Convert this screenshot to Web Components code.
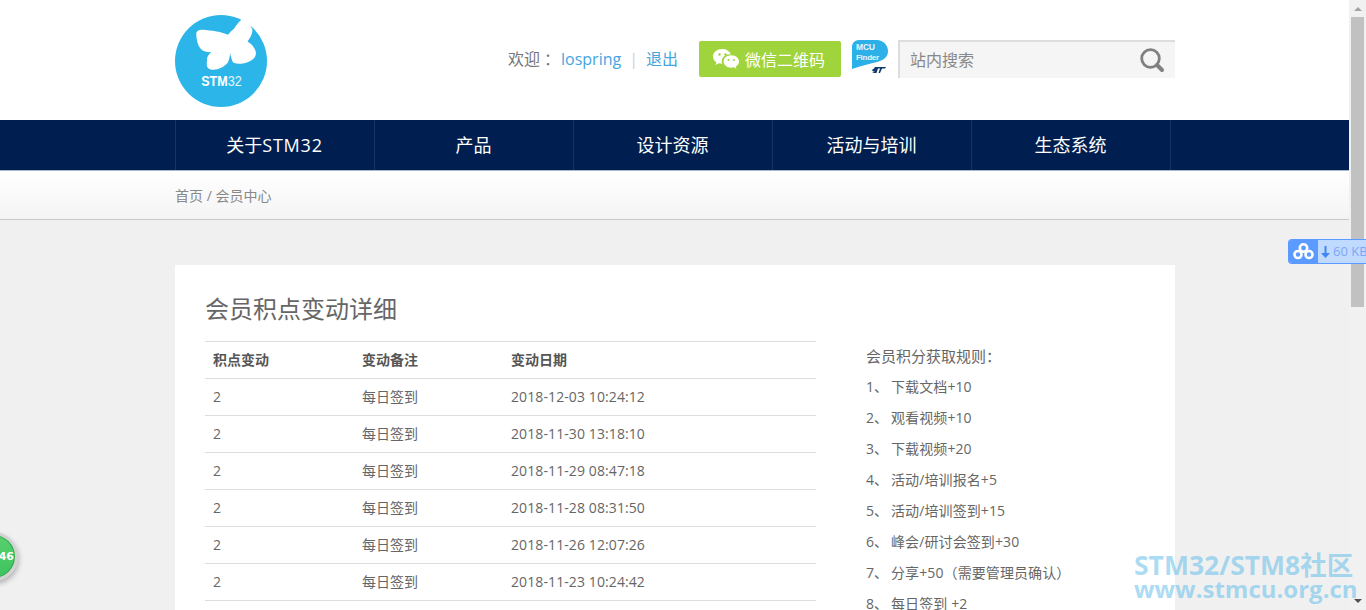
<!DOCTYPE html>
<html lang="zh">
<head>
<meta charset="utf-8">
<title>会员积点变动详细</title>
<style>
  html, body { margin: 0; height: 610px; overflow: hidden; background: #f0f0f0; }
  body { font-family: "Open Sans", "Noto Sans CJK SC", sans-serif; color: #666; }
</style>
</head>
<body>
<st-page>
  <st-header></st-header>
  <st-nav></st-nav>
  <st-crumb></st-crumb>
  <st-card>
    <st-points slot="main"></st-points>
    <st-rules slot="side"></st-rules>
  </st-card>
</st-page>
<st-float></st-float>
<script>
(function () {
  'use strict';

  function define(name, css, html, render) {
    customElements.define(name, class extends HTMLElement {
      constructor() {
        super();
        this.attachShadow({ mode: 'open' });
      }
      connectedCallback() {
        this.shadowRoot.innerHTML = `<style>${css}</style>${render ? render() : html}`;
      }
    });
  }

  // page + fake browser scrollbar
  define('st-page', `
    :host { display: flex; height: 610px; overflow: hidden; }
    .main { width: 1349px; flex: none; overflow: hidden; }
    .bar { width: 17px; flex: none; background: #f1f1f1; display: flex; flex-direction: column; align-items: center; }
    .up { width: 0; height: 0; margin-top: 7px; border: 4px solid transparent; border-top: 0; border-bottom: 4px solid #a3a3a3; }
    .thumb { width: 13px; height: 290px; margin-top: 6px; background: #c1c1c1; }
    .down { width: 0; height: 0; margin-top: auto; margin-bottom: 7px; border: 4px solid transparent; border-bottom: 0; border-top: 4px solid #505050; }
  `, `
    <div class="main"><slot></slot></div>
    <div class="bar"><div class="up"></div><div class="thumb"></div><div class="down"></div></div>
  `);

  define('st-header', `
    :host { display: block; background: #fff; height: 120px; }
    .wrap { width: 1000px; margin: 0 auto; height: 120px; display: flex; align-items: flex-start; position: relative; left: .5px; }
    .logo { width: 92px; height: 92px; margin-top: 15px; flex: none; display: block; }
    .who { margin-left: 241px; width: 166px; flex: none; margin-top: 47px; font-size: 16px; line-height: 24px; white-space: nowrap; color: #777; display: flex; }
    .who a { color: #45a5df; text-decoration: none; }
    .who .colon { font-family: "Noto Sans CJK TC", sans-serif; width: 16px; }
    .who .sep { color: #cfcfdc; margin: 0 8px 0 8px; }
    .who .name { margin-left: 5px; }
    .wx { margin-left: 25px; margin-top: 41px; width: 142px; flex: none; height: 36px; box-sizing: border-box; background: #9fd43c; border-radius: 2px; color: #fff; font-size: 16px; display: flex; align-items: center; padding-left: 13px; gap: 5px; white-space: nowrap; }
    .finder { margin-left: 11px; margin-top: 40px; width: 36px; height: 35px; flex: none; display: block; }
    .search { margin-left: 10px; margin-top: 40px; width: 277px; flex: none; height: 38px; box-sizing: border-box; background: #f5f5f5; border-top: 2px solid #ddd; border-left: 2px solid #ddd; display: flex; align-items: center; padding: 0 0 3px 10px; font-size: 16px; color: #888; }
    .search span { flex: 1; }
    .search svg { margin: 3px 10px 0 0; }
  `, `
    <div class="wrap">
      <svg class="logo" viewBox="0 0 93 93">
        <circle cx="46.5" cy="46.5" r="46.5" fill="#2cb5e8"/>
        <path fill="#fff" d="M53.5 20 C46 17 42 16.5 35 15.7 C28 14.5 21 14 21.5 20 C22 26 23 31 26.7 35 C29 37 33 38 36.7 37.7 C33.5 40 32 43 32.3 46 C32 50 31.5 54 36 55 C42 56.5 49 53 53.3 48.3 C55 45 55.5 41 55.7 38.3 C56.5 42 57.5 46 59 48.3 C63 50 68 49.5 71.7 48.3 C76 47 81 44.5 81.7 40 C82.5 36 79 30 73.3 26.7 C76 23 78.5 19 78.3 15 C76 10 74 6 70 1 L67.7 4.3 C64 7 62 10.5 60 13.3 C57 16 55 18 53.5 20 Z"/>
        <text y="72" x="26.5" font-family="Liberation Sans" font-size="14" fill="#fff" textLength="41" lengthAdjust="spacingAndGlyphs"><tspan font-weight="700">STM</tspan><tspan fill="#e4f5fc">32</tspan></text>
      </svg>
      <div class="who">欢迎<span class="colon">：</span><a class="name">lospring</a><span class="sep">|</span><a>退出</a></div>
      <div class="wx">
        <svg width="28" height="24" viewBox="0 0 28 24" fill="#fff">
          <path d="M10.5 2C5 2 1 5.400 1 9.500c0 2.400 1.300 4.400 3.400 5.800L3.500 18l3.200-1.700c1.100.3 2.300.5 3.500.5-.3-.8-.4-1.600-.4-2.400 0-4 3.600-7.100 8.300-7.100h.8C17.500 4 14.300 2 10.500 2z"/>
          <path d="M27 14.500c0-3.400-3.400-6.200-7.700-6.200s-7.700 2.800-7.700 6.200 3.400 6.200 7.700 6.200c.9 0 1.800-.1 2.600-.4l2.600 1.500-.7-2.300c2-1.200 3.200-2.900 3.200-4.800z"/>
          <circle cx="7.500" cy="7.500" r="1.200" fill="#9fd43c"/><circle cx="13.500" cy="7.500" r="1.200" fill="#9fd43c"/>
          <circle cx="16.500" cy="13" r="1" fill="#9fd43c"/><circle cx="22" cy="13" r="1" fill="#9fd43c"/>
        </svg>
        <span>微信二维码</span>
      </div>
      <svg class="finder" viewBox="0 0 36 35">
        <path fill="#2cb0e8" d="M7 0H25C31 0 36 5 36 11C36 17 32 20 25 22C17 24 8 26 0 29V7C0 3 3 0 7 0Z"/>
        <text x="4" y="10" font-family="Liberation Sans" font-size="8.500" font-weight="700" fill="#e8f6fd" textLength="19">MCU</text>
        <text x="4" y="19.500" font-family="Liberation Sans" font-size="8" font-weight="700" fill="#e8f6fd" textLength="23">Finder</text>
        <path fill="#0f3a6b" d="M23 27h11l-1 1.500h-3l-2 4.500h-1.500l1.500-4.500h-2l-1.500 4.500h-4.500l3-1.500h-2l-1-1.500 2-1.500z"/>
      </svg>
      <div class="search">
        <span>站内搜索</span>
        <svg width="26" height="26" viewBox="0 0 26 26" fill="none" stroke="#808080">
          <circle cx="11.500" cy="11.500" r="8.800" stroke-width="2.800"/>
          <path d="M18 18l5 5" stroke-width="4" stroke-linecap="round"/>
        </svg>
      </div>
    </div>
  `);

  const NAV = ['关于<i>STM32</i>', '产品', '设计资源', '活动与培训', '生态系统'];
  define('st-nav', `
    :host { display: block; background: #001f50; height: 50px; }
    .wrap { width: 996px; margin: 0 auto; position: relative; left: -1.5px; display: flex; height: 50px; border-left: 1px solid #12365f; }
    a { width: 198px; border-right: 1px solid #12365f; color: #fff; font-size: 18px; line-height: 50px; text-align: center; }
    i { font-style: normal; letter-spacing: .8px; }
  `, '', () => `<div class="wrap">${NAV.map(n => `<a>${n}</a>`).join('')}</div>`);

  define('st-crumb', `
    :host { display: block; height: 50px; box-sizing: border-box; background: linear-gradient(#fff, #f4f4f4); border-top: 1px solid #a9b9cb; border-bottom: 1px solid #c8c8c8; }
    .wrap { width: 1000px; margin: 0 auto; position: relative; left: .5px; font-size: 14px; line-height: 50px; color: #888; }
  `, `<div class="wrap">首页 / 会员中心</div>`);

  define('st-card', `
    :host { display: block; width: 1000px; margin: 45px auto 0; position: relative; left: .5px; background: #fff; padding: 26px 30px 0; box-sizing: border-box; height: 400px; }
    .cols { display: flex; }
    .main { width: 611px; flex: none; }
    .side { margin-left: 50px; }
  `, `<div class="cols">
      <div class="main"><slot name="main"></slot></div>
      <div class="side"><slot name="side"></slot></div>
    </div>`);

  const ROWS = ['2018-12-03 10:24:12', '2018-11-30 13:18:10', '2018-11-29 08:47:18', '2018-11-28 08:31:50',
    '2018-11-26 12:07:26', '2018-11-23 10:24:42', '2018-11-22 09:16:03'];
  define('st-points', `
    :host { display: block; }
    h2 { margin: 0 0 14px; font-weight: 400; font-size: 24px; line-height: 36px; color: #666; height: 36px; }
    .row { display: grid; grid-template-columns: 149px 149px 1fr; height: 37px; box-sizing: border-box; border-top: 1px solid #ddd; padding-left: 8px; font-size: 14px; line-height: 36px; color: #666; }
    .row.head { font-weight: 700; color: #555; line-height: 35px; }
    .date { letter-spacing: .1px; }
  `, '', () => `
    <h2>会员积点变动详细</h2>
    <div class="row head"><span>积点变动</span><span>变动备注</span><span>变动日期</span></div>
    ${ROWS.map(d => `<div class="row"><span>2</span><span>每日签到</span><span class="date">${d}</span></div>`).join('')}
  `);

  const RULES = ['下载文档+10', '观看视频+10', '下载视频+20', '活动/培训报名+5', '活动/培训签到+15',
    '峰会/研讨会签到+30', '分享+50<q>（</q>需要管理员确认<q>）</q>', '每日签到 +2'];
  define('st-rules', `
    :host { display: block; padding-top: 50px; color: #666; }
    .title { font-size: 15px; line-height: 30px; }
    .title span, q { font-family: "Noto Sans CJK TC", sans-serif; }
    q { quotes: none; }
    .li { display: flex; font-size: 14px; line-height: 31px; white-space: nowrap; letter-spacing: .1px; }
    .li b { font-weight: 400; width: 25px; flex: none; }
  `, '', () => `
    <div class="title">会员积分获取规则<span>：</span></div>
    ${RULES.map((r, i) => `<div class="li"><b>${i + 1}、</b><span>${r}</span></div>`).join('')}
  `);

  // things floating above the page: cloud tab, green ball, forum watermark
  define('st-float', `
    :host { display: block; }
    .cloud { position: absolute; left: 1288px; top: 239px; width: 78px; height: 25px; box-sizing: border-box; border: 1px solid #5b9bff; border-right: 0; border-radius: 4px 0 0 4px; background: #c0d9ff; display: flex; overflow: hidden; font-family: "Open Sans", sans-serif; font-size: 13px; color: #7ea8f5; line-height: 23px; white-space: nowrap; }
    .cloud .ic { width: 29px; background: #5b9bff; flex: none; display: flex; align-items: center; justify-content: center; }
    .cloud .arrow { color: #3d86f5; margin: 0 3px 0 3px; display: flex; align-items: center; }
    .ball { position: absolute; left: -31px; top: 532px; width: 49px; height: 49px; box-sizing: border-box; border-radius: 50%; background: linear-gradient(#5ad06e, #3cc25f); border: 3px solid #d2d2d2; box-shadow: 1px 3px 5px rgba(0,0,0,.25), inset 0 0 0 1px #2da84a; color: #fff; font: 700 11px/43px "DejaVu Sans", sans-serif; text-align: right; }
    .ball span { margin-right: 1px; }
    .mark { position: absolute; left: 1134px; top: 552px; color: rgba(100,190,235,.55); font-family: "Open Sans", "Noto Sans CJK SC", sans-serif; font-weight: 700; white-space: nowrap; }
    .mark div:first-child { font-size: 26.500px; line-height: 26px; }
    .mark div:last-child { font-size: 24px; line-height: 22px; }
  `, `
    <div class="cloud">
      <div class="ic">
        <svg width="21" height="17" viewBox="0 0 21 17" fill="none" stroke="#fff" stroke-width="2.600">
          <circle cx="10.500" cy="5" r="3.700"/><circle cx="5" cy="11.500" r="3.500"/><circle cx="16" cy="11.500" r="3.500"/>
        </svg>
      </div>
      <span class="arrow"><svg width="9" height="12" viewBox="0 0 9 12" fill="#3d86f5"><path d="M3.500 0h2v7H9l-4.500 5L0 7h3.500z"/></svg></span>60 KB
    </div>
    <div class="ball"><span>46</span></div>
    <div class="mark"><div>STM32/STM8社区</div><div>www.stmcu.org.cn</div></div>
  `);
})();
</script>
</body>
</html>
